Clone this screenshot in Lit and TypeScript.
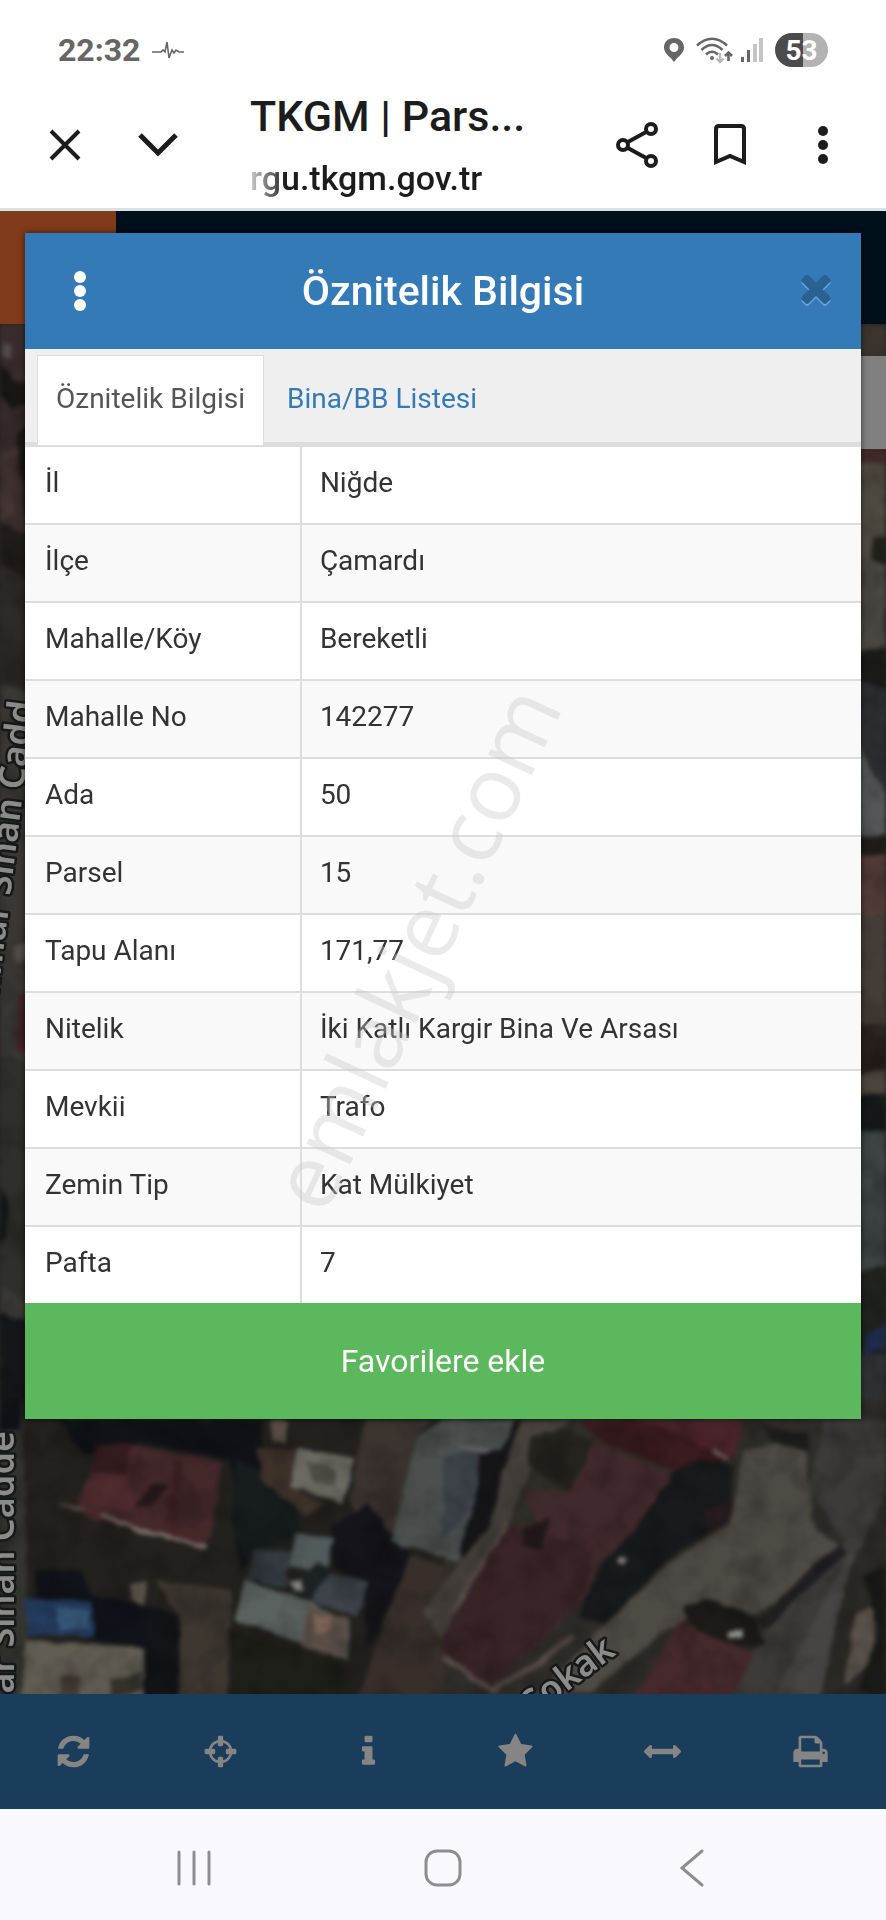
import { LitElement, html, svg, css } from "lit";
import { customElement, property, state } from "lit/decorators.js";
import { classMap } from "lit/directives/class-map.js";

type Field = { label: string; value: string };

const FIELDS: Field[] = [
  { label: "İl", value: "Niğde" },
  { label: "İlçe", value: "Çamardı" },
  { label: "Mahalle/Köy", value: "Bereketli" },
  { label: "Mahalle No", value: "142277" },
  { label: "Ada", value: "50" },
  { label: "Parsel", value: "15" },
  { label: "Tapu Alanı", value: "171,77" },
  { label: "Nitelik", value: "İki Katlı Kargir Bina Ve Arsası" },
  { label: "Mevkii", value: "Trafo" },
  { label: "Zemin Tip", value: "Kat Mülkiyet" },
  { label: "Pafta", value: "7" },
];

const TABS = ["Öznitelik Bilgisi", "Bina/BB Listesi"];

const TIMES =
  "M1490 1322q0 40-28 68l-136 136q-28 28-68 28t-68-28l-294-294-294 294q-28 28-68 28t-68-28l-136-136q-28-28-28-68t28-68l294-294-294-294q-28-28-28-68t28-68l136-136q28-28 68-28t68 28l294 294 294-294q28-28 68-28t68 28l136 136q28 28 28 68t-28 68l-294 294 294 294q28 28 28 68z";

const TOOLS = [
  {
    label: "Yenile",
    path: "M1639 1056q0 5-1 7-64 268-268 434.5t-478 166.5q-146 0-282.5-55t-243.5-157l-129 129q-19 19-45 19t-45-19-19-45v-448q0-26 19-45t45-19h448q26 0 45 19t19 45-19 45l-137 137q71 66 161 102t187 36q134 0 250-65t186-179q11-17 53-117 8-23 30-23h192q13 0 22.5 9.5t9.5 22.5zm25-800v448q0 26-19 45t-45 19h-448q-26 0-45-19t-19-45 19-45l138-138q-148-137-349-137-134 0-250 65t-186 179q-11 17-53 117-8 23-30 23h-199q-13 0-22.5-9.5t-9.5-22.5v-7q65-268 270-434.5t480-166.5q146 0 284 55.5t245 156.5l130-129q19-19 45-19t45 19 19 45z",
  },
  {
    label: "Konum",
    path: "M1325 1024h-109q-26 0-45-19t-19-45v-128q0-26 19-45t45-19h109q-32-108-112.5-188.5t-188.5-112.5v109q0 26-19 45t-45 19h-128q-26 0-45-19t-19-45v-109q-108 32-188.5 112.5t-112.5 188.5h109q26 0 45 19t19 45v128q0 26-19 45t-45 19h-109q32 108 112.5 188.5t188.5 112.5v-109q0-26 19-45t45-19h128q26 0 45 19t19 45v109q108-32 188.5-112.5t112.5-188.5zm339-192v128q0 26-19 45t-45 19h-143q-37 161-154.5 278.5t-278.5 154.5v143q0 26-19 45t-45 19h-128q-26 0-45-19t-19-45v-143q-161-37-278.5-154.5t-154.5-278.5h-143q-26 0-45-19t-19-45v-128q0-26 19-45t45-19h143q37-161 154.5-278.5t278.5-154.5v-143q0-26 19-45t45-19h128q26 0 45 19t19 45v143q161 37 278.5 154.5t154.5 278.5h143q26 0 45 19t19 45z",
  },
  {
    label: "Bilgi",
    path: "M1216 1344v128q0 26-19 45t-45 19h-512q-26 0-45-19t-19-45v-128q0-26 19-45t45-19h64v-384h-64q-26 0-45-19t-19-45v-128q0-26 19-45t45-19h384q26 0 45 19t19 45v576h64q26 0 45 19t19 45zm-128-1152v192q0 26-19 45t-45 19h-256q-26 0-45-19t-19-45v-192q0-26 19-45t45-19h256q26 0 45 19t19 45z",
  },
  {
    label: "Favoriler",
    path: "M1728 647q0 22-26 48l-363 354 86 500q1 7 1 20 0 21-10.5 35.5t-30.5 14.5q-19 0-40-12l-449-236-449 236q-22 12-40 12-21 0-31.5-14.5t-10.5-35.5q0-6 2-20l86-500-364-354q-25-27-25-48 0-37 56-46l502-73 225-455q19-41 49-41t49 41l225 455 502 73q56 9 56 46z",
  },
  {
    label: "Ölç",
    path: "M1792 896q0 26-19 45l-256 256q-19 19-45 19t-45-19-19-45v-128h-1024v128q0 26-19 45t-45 19-45-19l-256-256q-19-19-19-45t19-45l256-256q19-19 45-19t45 19 19 45v128h1024v-128q0-26 19-45t45-19 45 19l256 256q19 19 19 45z",
  },
  {
    label: "Yazdır",
    path: "M448 1536h896v-256h-896v256zm0-640h896v-384h-160q-40 0-68-28t-28-68v-160h-640v640zm1152 64q0-26-19-45t-45-19-45 19-19 45 19 45 45 19 45-19 19-45zm128 0v416q0 13-9.5 22.5t-22.5 9.5h-224v160q0 40-28 68t-68 28h-960q-40 0-68-28t-28-68v-160h-224q-13 0-22.5-9.5t-9.5-22.5v-416q0-79 56.5-135.5t135.5-56.5h64v-544q0-40 28-68t68-28h672q40 0 88 20t76 48l152 152q28 28 48 76t20 88v256h64q79 0 135.5 56.5t56.5 135.5z",
  },
];

// [fill, polygon points]
type Shape = [string, string];

const WEST_STRIP: Shape[] = [
  ["#3d2b2b", "0,0 40,0 40,250 0,250"],
  ["#181713", "0,40 14,56 40,60 40,78 12,84 0,70"],
  ["#56484a", "2,18 12,22 12,34 4,32"],
  ["#1a1814", "16,110 40,90 40,200 26,190"],
  ["#4a3434", "0,130 16,124 14,190 0,196"],
  ["#211d1a", "0,200 40,216 40,262 0,240"],
  ["#2d2b27", "0,250 40,262 40,370 0,370"],
  ["#393833", "0,360 40,370 40,1000 0,1000"],
  ["#55534c", "14,622 40,618 40,634 16,640"],
  ["#4b2527", "18,672 40,664 40,730 16,726"],
  ["#2f302b", "0,730 40,740 40,990 0,960"],
  ["#16171b", "0,860 8,880 6,912 0,920"],
  ["#15161a", "0,990 40,1000 40,1104 0,1104"],
];

const EAST_STRIP: Shape[] = [
  ["#3d352c", "850,0 886,0 886,126 850,126"],
  ["#4a2a28", "850,124 886,124 886,140 850,134"],
  ["#4f4a3f", "850,136 886,140 886,250 850,250"],
  ["#22221c", "874,214 886,214 886,240 872,236"],
  ["#4b4740", "850,250 886,240 886,330 850,330"],
  ["#1b1b19", "850,328 886,322 886,366 850,352"],
  ["#2c2f33", "850,352 886,366 886,470 850,400"],
  ["#525657", "850,400 868,440 886,470 886,520 850,510"],
  ["#1f1c1a", "850,516 886,510 886,534 850,534"],
  ["#5a3d38", "850,534 886,530 886,590 850,590"],
  ["#463c34", "850,590 886,590 886,700 850,700"],
  ["#291f1b", "850,704 886,712 886,748 850,752"],
  ["#4d4439", "850,752 886,746 886,770 850,772"],
  ["#14191a", "850,772 886,772 886,806 850,808"],
  ["#3d4344", "850,808 886,806 886,950 850,950"],
  ["#1f221e", "850,950 886,940 886,1030 850,1030"],
  ["#1c2c55", "866,1010 886,1000 886,1024 864,1032"],
  ["#303236", "850,1032 886,1030 886,1110 850,1110"],
];

// The two southern quarters start at y = 1076, the eastern one at x = 443.
const SOUTH_WEST: Shape[] = [
  ["#22211d", "0,0 443,0 443,300 0,300"],
  ["#34342f", "0,0 22,0 30,300 0,300"],
  ["#111218", "0,0 22,0 20,30 0,30"],
  ["#111219", "60,20 262,20 262,140 240,170 232,60 140,42 84,56"],
  ["#161c1e", "236,60 290,86 300,130 246,160 232,130"],
  ["#4a2629", "78,100 92,70 96,48 132,44 222,62 212,135 202,146 85,117"],
  ["#381a1d", "90,72 96,46 130,44 126,74"],
  ["#56292d", "84,84 126,74 136,108 84,112"],
  ["#431e23", "174,56 182,58 176,124 168,122"],
  ["#25161a", "152,84 168,86 152,106 134,108"],
  ["#524438", "60,102 84,106 84,112 60,106"],
  ["#403128", "258,48 296,50 290,86 326,104 306,116 262,80"],
  ["#5a4d43", "270,20 288,20 286,44 272,42"],
  ["#6b6a5f", "297,48 354,58 344,104 290,86"],
  ["#4c4c44", "308,62 336,70 334,86 312,82"],
  ["#3c342e", "366,20 430,20 418,40 392,142 350,104 356,58"],
  ["#14141b", "332,125 368,104 410,155 396,196 366,250 366,184 332,166"],
  ["#4f5b5d", "295,133 334,138 326,172 288,166"],
  ["#343b41", "254,150 290,152 286,188 248,178"],
  ["#59625f", "246,180 310,202 350,222 348,260 234,220"],
  ["#3c434b", "318,170 368,182 358,216 312,202"],
  ["#1c2225", "288,188 318,162 332,172 312,196"],
  ["#84857f", "288,182 300,180 304,190 294,192"],
  ["#5d4d45", "306,206 350,218 346,256 302,248"],
  ["#806251", "312,214 330,216 332,230 316,234"],
  ["#3a2f29", "410,155 443,165 443,300 358,300 384,222"],
  ["#3e372e", "155,180 232,190 228,300 180,300 178,215"],
  ["#5a5348", "130,184 146,182 144,204 132,202"],
  ["#11131c", "36,170 80,170 92,196 146,206 146,248 92,240 36,200"],
  ["#1f3d68", "24,198 92,202 94,236 28,236"],
  ["#315a85", "56,206 88,210 88,228 58,230"],
  ["#625d50", "25,240 145,248 143,300 22,300"],
  ["#443c32", "62,276 80,276 80,300 60,300"],
  ["#343128", "110,280 142,272 142,290 112,300"],
  ["#131419", "146,206 180,216 178,300 145,300"],
  ["#1f1f18", "228,230 340,262 356,300 232,300"],
];

const SOUTH_EAST: Shape[] = [
  ["#302d28", "0,0 443,0 443,300 0,300"],
  ["#4a504f", "-26,38 0,20 72,20 66,48 44,62 16,162 -52,142"],
  ["#3b424a", "0,54 40,54 28,108 0,140"],
  ["#6a6c6a", "16,46 50,50 48,54 18,50"],
  ["#16161a", "72,20 78,20 60,70 48,124 20,158 16,152 36,84 36,54 58,50"],
  ["#47413a", "78,20 130,20 106,32 78,90 64,128 0,240 -20,210 20,158 48,124 60,70"],
  ["#24231d", "88,36 120,28 150,40 144,66 128,92 112,82 84,64"],
  ["#46292c", "150,42 230,72 190,132 155,165 145,196 50,286 0,256 0,236 60,126 96,124 80,90 128,92"],
  ["#3d2428", "64,124 150,150 140,196 50,286 0,256 0,236"],
  ["#251719", "82,128 108,118 98,150 80,146"],
  ["#40191e", "136,20 300,20 290,60 246,72 230,70 160,42"],
  ["#52222a", "200,20 302,20 290,58 250,42"],
  ["#181a1c", "230,72 252,60 290,66 286,122 236,150 205,180 165,226 136,216 158,165 190,132"],
  ["#2a1c20", "262,110 286,100 284,122 264,132"],
  ["#4f4b43", "300,52 360,36 372,130 400,148 350,192 310,215 262,205 215,238 150,290 90,300 150,236 230,160 288,124"],
  ["#3d3b3a", "380,20 443,20 443,110 400,220 375,300 288,300 322,230 400,142 366,90"],
  ["#484543", "372,220 408,150 420,180 380,300 330,300"],
  ["#2d2a25", "406,170 443,96 443,300 376,300"],
  ["#1c1d19", "318,24 368,34 364,52 330,42"],
  ["#1d1b18", "240,206 270,200 310,215 322,244 290,250 250,226"],
  ["#4a282b", "236,222 310,254 288,300 190,300"],
  ["#8f8f88", "286,230 300,230 298,238 286,237"],
  ["#7d7b74", "176,156 184,158 182,164 174,163"],
  ["#5c5247", "412,214 434,204 430,262 402,284"],
  ["#1a1b17", "420,176 443,168 443,300 414,292 436,230"],
];

const polygons = (shapes: Shape[]) =>
  shapes.map(([fill, points]) => svg`<polygon fill=${fill} points=${points} />`);

@customElement("satellite-map")
export class SatelliteMap extends LitElement {
  static styles = css`
    :host {
      display: block;
      position: relative;
      overflow: hidden;
      background: #2a2824;
    }
    svg {
      position: absolute;
      inset: 0;
      width: 100%;
      height: 100%;
    }
    filter {
      color-interpolation-filters: sRGB;
    }
    .street {
      font: 600 36px "Noto Sans", sans-serif;
      fill: #8b8b89;
      stroke: #17181a;
      stroke-width: 5px;
      stroke-linejoin: round;
      paint-order: stroke;
    }
  `;

  render() {
    return html`
      <svg viewBox="0 0 886 1370" preserveAspectRatio="xMinYMax slice" aria-hidden="true">
        <defs>
          <filter id="soft" x="0" y="0" width="100%" height="100%">
            <feTurbulence type="fractalNoise" baseFrequency="0.06" numOctaves="3" result="noise" />
            <feDisplacementMap
              in="SourceGraphic"
              in2="noise"
              scale="6"
              xChannelSelector="R"
              yChannelSelector="G"
            />
            <feGaussianBlur stdDeviation="2" />
            <feColorMatrix type="saturate" values="0.8" />
          </filter>
          <filter id="grain" x="0" y="0" width="100%" height="100%">
            <feTurbulence type="fractalNoise" baseFrequency="0.03" numOctaves="3" />
            <feColorMatrix
              values="0 0 0 0 0  0 0 0 0 0  0 0 0 0 0  0 2.4 0 0 -0.95"
            />
          </filter>
        </defs>
        <g filter="url(#soft)">
          ${polygons(WEST_STRIP)} ${polygons(EAST_STRIP)}
          <g transform="translate(0 1076)">
            ${polygons(SOUTH_WEST)}
            <path d="M100 115L140 130L206 147" fill="none" stroke="#7b6d62" stroke-width="4" />
          </g>
          <g transform="translate(443 1076)">
            ${polygons(SOUTH_EAST)}
            <path
              d="M0 256L50 290L96 262L130 236M8 214L64 124"
              fill="none"
              stroke="#5b4d46"
              stroke-width="5"
            />
            <path d="M268 50L286 60" stroke="#7b6a66" stroke-width="4" />
            <path
              d="M400 148L366 178L318 226"
              fill="none"
              stroke="#1f1e20"
              stroke-width="12"
            />
          </g>
        </g>
        <rect width="886" height="1370" filter="url(#grain)" opacity="0.2" />
        <text class="street" text-anchor="end" transform="translate(34 378) rotate(-83)">
          Mimar Sinan Cadd
        </text>
        <text class="street" text-anchor="end" transform="translate(14 1107) rotate(-90)">
          Mimar Sinan Cadde
        </text>
        <text class="street" text-anchor="end" transform="translate(617 1330) rotate(-37)">
          Sokak
        </text>
      </svg>
    `;
  }
}

@customElement("attribute-dialog")
export class AttributeDialog extends LitElement {
  static styles = css`
    :host {
      display: block;
      background: white;
      box-shadow: 0 0 6px rgba(0, 0, 0, 0.6);
      font-family: Roboto, sans-serif;
      color: #333;
    }
    button {
      border: none;
      background: none;
      padding: 0;
      margin: 0;
      font: inherit;
      color: inherit;
      cursor: pointer;
    }
    .head {
      display: grid;
      grid-template-columns: 110px 1fr 110px;
      align-items: center;
      min-height: 116px;
      background: #337ab7;
      color: white;
    }
    .head h1 {
      margin: 0;
      font-size: 41px;
      font-weight: 500;
      line-height: 48px;
      text-align: center;
    }
    .head button {
      display: grid;
      place-items: center;
      height: 80px;
    }
    .head .close {
      padding-left: 20px;
      color: #296193;
    }
    .close svg {
      filter: drop-shadow(0 2px 0 #6ba3d3);
    }
    .tabs {
      display: flex;
      gap: 4px;
      height: 90px;
      padding: 6px 12px 0;
      background: #efefef;
      box-shadow: inset 0 -3px #ddd;
    }
    .tab {
      padding: 0 18px 4px;
      border: 1px solid transparent;
      border-bottom: none;
      font-size: 28px;
      color: #337ab7;
    }
    .tab.active {
      background: white;
      border-color: #ddd;
      color: #555;
    }
    table {
      width: 100%;
      border-collapse: collapse;
      table-layout: fixed;
      font-size: 28px;
      line-height: 36px;
    }
    th,
    td {
      height: 72px;
      padding: 0 18px 4px;
      border-top: 2px solid #ddd;
      font-weight: 400;
      text-align: left;
    }
    th {
      width: 33%;
      padding-left: 20px;
      box-sizing: border-box;
      border-right: 2px solid #ddd;
    }
    tr:nth-child(even) {
      background: #f9f9f9;
    }
    .favourite {
      display: block;
      width: 100%;
      height: 116px;
      background: #5cb85c;
      color: white;
      font-size: 32px;
    }
  `;

  @property({ attribute: false }) fields: Field[] = [];
  @state() private _tab = 0;

  render() {
    return html`
      <header class="head">
        <button aria-label="Menü">
          <svg width="12" height="40" viewBox="0 0 12 40" fill="currentColor">
            <circle cx="6" cy="6" r="6" />
            <circle cx="6" cy="20" r="6" />
            <circle cx="6" cy="34" r="6" />
          </svg>
        </button>
        <h1>Öznitelik Bilgisi</h1>
        <button class="close" aria-label="Kapat">
          <svg width="44" height="44" viewBox="0 0 1792 1792" fill="currentColor">
            <path d=${TIMES} transform="translate(0 -132)" />
          </svg>
        </button>
      </header>
      <div class="tabs" role="tablist">
        ${TABS.map(
          (label, i) => html`
            <button
              role="tab"
              aria-selected=${i === this._tab ? "true" : "false"}
              class=${classMap({ tab: true, active: i === this._tab })}
              @click=${() => {
                this._tab = i;
              }}
            >
              ${label}
            </button>
          `
        )}
      </div>
      <table>
        <tbody>
          ${this.fields.map(
            (f) => html`
              <tr>
                <th scope="row">${f.label}</th>
                <td>${f.value}</td>
              </tr>
            `
          )}
        </tbody>
      </table>
      <button class="favourite">Favorilere ekle</button>
    `;
  }
}

@customElement("app-root")
export class AppRoot extends LitElement {
  static styles = css`
    :host {
      display: flex;
      flex-direction: column;
      position: relative;
      min-height: 100vh;
      overflow: hidden;
      background: white;
      font-family: Roboto, sans-serif;
      color: #1c1c1c;
    }
    button {
      display: grid;
      place-items: center;
      border: none;
      background: none;
      padding: 0;
      margin: 0;
      font: inherit;
      color: inherit;
      cursor: pointer;
    }
    .status {
      display: flex;
      align-items: center;
      height: 64px;
      padding: 18px 58px 0;
      color: #666;
    }
    .status time {
      margin-right: 12px;
      font-size: 32px;
      font-weight: 700;
    }
    .status .radio {
      display: flex;
      align-items: center;
      gap: 8px;
      margin-left: auto;
    }
    .pin {
      margin-right: 4px;
    }
    .battery {
      display: grid;
      place-items: center;
      width: 53px;
      height: 34px;
      margin-left: 4px;
      border-radius: 17px;
      background: linear-gradient(to right, #4b4b4b 52%, #b3b3b3 52%);
      color: white;
      font-size: 28px;
      font-weight: 700;
    }
    .browser {
      display: flex;
      align-items: center;
      height: 126px;
      padding: 0 17px 0 18px;
      border-bottom: 3px solid #dae2e9;
    }
    .browser button {
      width: 93px;
      height: 93px;
    }
    .address {
      flex: 1;
      min-width: 0;
      margin-left: 46px;
      padding-top: 4px;
      font-weight: 500;
      line-height: 62px;
      white-space: nowrap;
    }
    .address .title {
      font-size: 43px;
    }
    .address .url {
      font-size: 34px;
      -webkit-mask-image: linear-gradient(to right, transparent -10px, black 36px);
      mask-image: linear-gradient(to right, transparent -10px, black 36px);
    }
    .page {
      flex: 1;
      display: grid;
    }
    .site,
    .page attribute-dialog {
      grid-area: 1 / 1;
    }
    .site {
      display: flex;
      flex-direction: column;
    }
    .page attribute-dialog {
      position: relative;
      align-self: start;
      margin: 22px 25px;
    }
    .banner {
      height: 113px;
      background: linear-gradient(to right, #803b1b 116px, #00101b 116px);
    }
    .map {
      flex: 1;
      display: grid;
      position: relative;
    }
    .search {
      position: absolute;
      top: 32px;
      right: 0;
      width: 80px;
      height: 93px;
      background: #808080;
    }
    .tools {
      display: grid;
      grid-template-columns: repeat(6, 1fr);
      height: 115px;
      padding-right: 2px;
      background: #1a3d5b;
      color: #858585;
    }
    .nav {
      display: grid;
      grid-template-columns: repeat(3, 1fr);
      height: 105px;
      padding: 6px 70px 0;
      background: #f8f8fe;
      color: #8e8e91;
    }
    .watermark {
      position: absolute;
      top: calc(50% - 13px);
      left: calc(50% - 30px);
      transform: translate(-50%, -50%) rotate(-65deg);
      font-family: "Open Sans", sans-serif;
      font-size: 90px;
      color: rgba(200, 200, 200, 0.38);
      pointer-events: none;
    }
  `;

  private _status() {
    return html`
      <div class="status">
        <time>22:32</time>
        <svg width="32" height="20" viewBox="0 0 32 20" fill="none" stroke="currentColor" stroke-width="1.6">
          <path d="M0 12H9L11 10L13 12L15 2L17 18L20 10L22 13L24 10L27 12H32" />
        </svg>
        <div class="radio">
          <svg class="pin" width="20" height="24" viewBox="0 0 20 24" fill="currentColor">
            <path
              fill-rule="evenodd"
              d="M10 0C4 0 0 4 0 9.5C0 16 7 19 9 23Q10 24.5 11 23C13 19 20 16 20 9.5C20 4 16 0 10 0ZM10 5A4.5 4.5 0 1 1 10 14A4.5 4.5 0 1 1 10 5Z"
            />
          </svg>
          <svg width="37" height="28" viewBox="0 0 37 28" fill="none" stroke="currentColor" stroke-width="2.6">
            <path d="M1 9.5Q16 -4 31 9.5M5.5 14Q16 4 26.5 14M10 18.5Q16 13 22 18.5" />
            <circle cx="16" cy="22" r="2" fill="currentColor" stroke="none" />
            <path d="M24 17V26M20.5 22.5L24 26L27.5 22.5" stroke="#b9b9b9" stroke-width="2.4" />
            <path d="M32.5 25V17M29 20L32.5 16.5L36 20" />
          </svg>
          <svg width="22" height="24" viewBox="0 0 22 24" fill="currentColor">
            <rect y="19" width="3" height="5" />
            <rect x="6" y="12" width="3" height="12" />
            <rect x="12" y="6" width="4" height="18" fill="#c4c4c4" />
            <rect x="18" y="0" width="4" height="24" fill="#c4c4c4" />
          </svg>
          <div class="battery">53</div>
        </div>
      </div>
    `;
  }

  private _browserBar() {
    return html`
      <div class="browser">
        <button aria-label="Kapat">
          <svg width="32" height="32" viewBox="0 0 32 32" stroke="currentColor" stroke-width="4">
            <path d="M2 2L30 30M30 2L2 30" />
          </svg>
        </button>
        <button aria-label="Küçült">
          <svg width="40" height="24" viewBox="0 0 40 24" fill="none" stroke="currentColor" stroke-width="5">
            <path d="M2 2L20 20L38 2" />
          </svg>
        </button>
        <div class="address">
          <div class="title">TKGM | Pars...</div>
          <div class="url">rgu.tkgm.gov.tr</div>
        </div>
        <button aria-label="Paylaş">
          <svg width="42" height="46" viewBox="0 0 42 46" fill="none" stroke="currentColor" stroke-width="4">
            <circle cx="7" cy="23" r="5" />
            <circle cx="35" cy="7" r="5" />
            <circle cx="35" cy="39" r="5" />
            <path d="M11 20.5L31 9.5M11 25.5L31 36.5" />
          </svg>
        </button>
        <button aria-label="Yer işareti">
          <svg width="32" height="42" viewBox="0 0 32 42" fill="none" stroke="currentColor" stroke-width="4">
            <path d="M2 38V5Q2 2 5 2H27Q30 2 30 5V38L16 32Z" />
          </svg>
        </button>
        <button aria-label="Diğer seçenekler">
          <svg width="10" height="38" viewBox="0 0 10 38" fill="currentColor">
            <circle cx="5" cy="5" r="5" />
            <circle cx="5" cy="19" r="5" />
            <circle cx="5" cy="33" r="5" />
          </svg>
        </button>
      </div>
    `;
  }

  private _nav() {
    return html`
      <nav class="nav">
        <button aria-label="Son uygulamalar">
          <svg width="34" height="36" viewBox="0 0 34 36" stroke="currentColor" stroke-width="3" stroke-linecap="round">
            <path d="M2 2V34M17 2V34M32 2V34" />
          </svg>
        </button>
        <button aria-label="Ana ekran">
          <svg width="38" height="38" viewBox="0 0 38 38" fill="none" stroke="currentColor" stroke-width="3">
            <rect x="2" y="2" width="34" height="34" rx="11" />
          </svg>
        </button>
        <button aria-label="Geri">
          <svg width="24" height="38" viewBox="0 0 24 38" fill="none" stroke="currentColor" stroke-width="3" stroke-linecap="round">
            <path d="M22 2L2 19L22 36" />
          </svg>
        </button>
      </nav>
    `;
  }

  render() {
    return html`
      ${this._status()} ${this._browserBar()}
      <main class="page">
        <div class="site">
          <div class="banner"></div>
          <div class="map">
            <satellite-map></satellite-map>
            <div class="search"></div>
          </div>
          <div class="tools">
            ${TOOLS.map(
              (t) => html`
                <button aria-label=${t.label}>
                  <svg width="37" height="37" viewBox="0 0 1792 1792" fill="currentColor">
                    <path d=${t.path} />
                  </svg>
                </button>
              `
            )}
          </div>
        </div>
        <attribute-dialog .fields=${FIELDS}></attribute-dialog>
      </main>
      ${this._nav()}
      <div class="watermark">emlakjet.com</div>
    `;
  }
}
